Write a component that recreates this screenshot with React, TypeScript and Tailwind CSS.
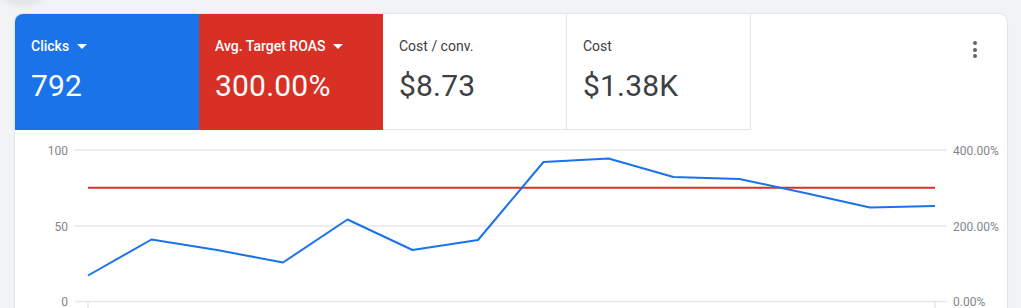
import clsx from "clsx";

type Metric = {
  label: string;
  value: string;
  tone: "blue" | "red" | "plain";
  dropdown?: boolean;
};

const metrics: Metric[] = [
  { label: "Clicks", value: "792", tone: "blue", dropdown: true },
  { label: "Avg. Target ROAS", value: "300.00%", tone: "red", dropdown: true },
  { label: "Cost / conv.", value: "$8.73", tone: "plain" },
  { label: "Cost", value: "$1.38K", tone: "plain" },
];

// clicks per day, already in page px (y=150 is 100, y=301 is 0)
const clicks: [number, number][] = [
  [88, 275.5],
  [151.5, 239.5],
  [217, 250],
  [283, 262.5],
  [347.5, 219.5],
  [412.5, 250],
  [478, 240],
  [543.5, 162],
  [608.5, 158.5],
  [673.5, 177],
  [739.5, 179],
  [805, 193],
  [870, 207.5],
  [935, 206],
];

function Caret() {
  return (
    <svg width="10" height="5" viewBox="0 0 10 5" className="ml-2 mt-px">
      <path d="M0 0h10L5 5z" fill="currentColor" />
    </svg>
  );
}

function MetricTile({ metric }: { metric: Metric }) {
  return (
    <div
      className={clsx(
        "flex w-[184px] flex-col px-4 pt-[23px]",
        metric.tone === "blue" && "rounded-tl-lg bg-[#1a73e8] text-white",
        metric.tone === "red" && "bg-[#d93025] text-white",
        metric.tone === "plain" && "border-r border-b border-[#e3e4e6] text-[#3c4043]",
      )}
    >
      <div className="flex h-[18px] items-center text-[14px] leading-[18px]">
        <span className={metric.dropdown ? "font-medium" : ""}>{metric.label}</span>
        {metric.dropdown && <Caret />}
      </div>
      <div className="mt-[13px] text-[30px] leading-9 tracking-[0.2px]">{metric.value}</div>
    </div>
  );
}

function Chart() {
  const line = clicks.map(([x, y]) => `${x},${y}`).join(" ");
  const grid = [150, 226, 301.5];

  return (
    <svg width="992" height="200" viewBox="15 130 992 200" className="block">
      {grid.map((y) => (
        <line key={y} x1="75" x2="947" y1={y} y2={y} stroke="#e6e7e9" strokeWidth="1.5" />
      ))}
      <line x1="88" x2="88" y1="302" y2="330" stroke="#e6e7e9" strokeWidth="1.5" />
      <line x1="935" x2="935" y1="302" y2="330" stroke="#e6e7e9" strokeWidth="1.5" />

      <g fill="#80868b" fontSize="12" fontFamily="Roboto, sans-serif">
        <text x="68" y="154.5" textAnchor="end">100</text>
        <text x="68" y="230.5" textAnchor="end">50</text>
        <text x="68" y="306" textAnchor="end">0</text>
        <text x="953" y="154.5">400.00%</text>
        <text x="953" y="230.5">200.00%</text>
        <text x="953" y="306">0.00%</text>
      </g>

      <line x1="88" x2="935" y1="187.7" y2="187.7" stroke="#d93025" strokeWidth="2" />
      <polyline points={line} fill="none" stroke="#1a73e8" strokeWidth="2" strokeLinejoin="round" />
    </svg>
  );
}

export default function App() {
  return (
    <div className="relative min-h-[308px] overflow-hidden bg-[#f1f3f4] pt-[14px] pl-[15px] font-['Roboto',sans-serif]">
      <div className="absolute -top-[46px] left-[-6px] h-[52px] w-[58px] rounded-full bg-[#e4e5e7] blur-[2px]" />

      <div className="w-[992px] rounded-t-lg bg-white shadow-[0_0_0_1px_#e3e4e6,0_1px_2px_rgba(60,64,67,0.15)]">
        <div className="flex h-[116px]">
          {metrics.map((m) => (
            <MetricTile key={m.label} metric={m} />
          ))}
          <div className="flex flex-1 justify-end pt-[27px] pr-[30px]">
            <div className="flex flex-col gap-[2.5px]">
              <span className="h-[4px] w-[4px] rounded-full bg-[#5f6368]" />
              <span className="h-[4px] w-[4px] rounded-full bg-[#5f6368]" />
              <span className="h-[4px] w-[4px] rounded-full bg-[#5f6368]" />
            </div>
          </div>
        </div>
        <Chart />
      </div>
    </div>
  );
}
